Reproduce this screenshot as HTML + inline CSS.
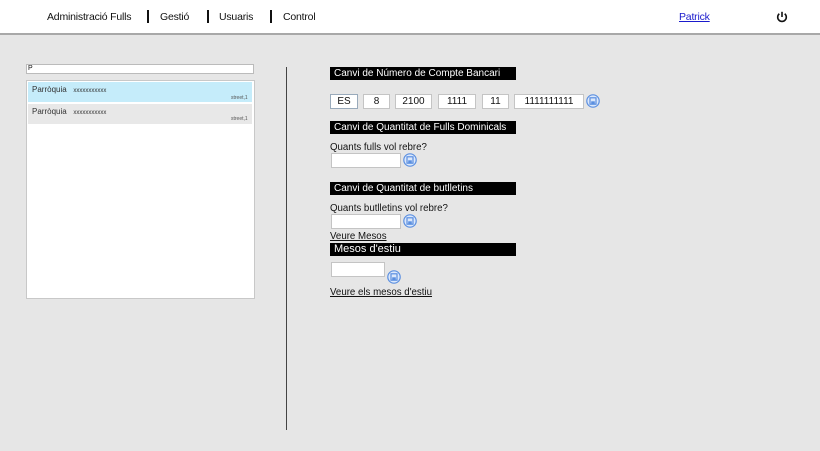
<!DOCTYPE html>
<html><head><meta charset="utf-8"><style>
*{margin:0;padding:0;box-sizing:border-box}
body{width:820px;height:451px;background:#e6e6e6;font-family:"Liberation Sans",Arial,sans-serif;position:relative;overflow:hidden;color:#111}
.hdr{position:absolute;left:0;top:0;width:820px;height:35px;background:#fff;border-bottom:2px solid #a8a8a8}
.t{position:absolute;font-size:9.7px;white-space:nowrap}
.h{font-size:10.5px;top:11px;letter-spacing:-0.2px}
.sep{position:absolute;top:10px;width:2px;height:13px;background:#111}
.abs{position:absolute}
.bar{position:absolute;background:#000;color:#fff;font-size:10px;height:13px;line-height:13px;padding-left:4px;white-space:nowrap;overflow:hidden}
.in{position:absolute;background:#fff;border:1px solid #c4c4c4;font-size:10px;text-align:center;height:15px;line-height:13px}
.sv{position:absolute;width:14px;height:14px}
</style></head><body>
<div class="hdr">
 <div class="t h" style="left:47px">Administració Fulls</div>
 <div class="sep" style="left:147px"></div>
 <div class="t h" style="left:160px">Gestió</div>
 <div class="sep" style="left:207px"></div>
 <div class="t h" style="left:219px">Usuaris</div>
 <div class="sep" style="left:270px"></div>
 <div class="t h" style="left:283px">Control</div>
 <div class="t h" style="left:679px;color:#1a1acc;text-decoration:underline">Patrick</div>
 <svg class="abs" style="left:776px;top:11px" width="12" height="12" viewBox="0 0 12 12"><path d="M3.3 2.8A4.3 4.3 0 1 0 8.7 2.8" fill="none" stroke="#111" stroke-width="1.6"/><path d="M6 0.8V6" stroke="#111" stroke-width="1.6"/></svg>
</div>

<div class="abs" style="left:26px;top:64px;width:228px;height:10px;background:#fff;border:1px solid #bbb;font-size:7px;line-height:8px;padding-left:1px">P</div>
<div class="abs" style="left:26px;top:80px;width:229px;height:219px;background:#fff;border:1px solid #c8c8c8"></div>
<div class="abs" style="left:28px;top:82px;width:224px;height:20px;background:#c5ecfa"></div>
<div class="abs" style="left:28px;top:104px;width:224px;height:20px;background:#e8e8e8"></div>
<div class="t" style="left:32px;top:85px;font-size:8px;color:#333">Parròquia&nbsp;&nbsp; <span style="font-size:6px">xxxxxxxxxxx</span></div>
<div class="t" style="left:231px;top:95px;font-size:5px;color:#555">street,1</div>
<div class="t" style="left:32px;top:107px;font-size:8px;color:#333">Parròquia&nbsp;&nbsp; <span style="font-size:6px">xxxxxxxxxxx</span></div>
<div class="t" style="left:231px;top:116px;font-size:5px;color:#555">street,1</div>

<div class="abs" style="left:286px;top:67px;width:1px;height:363px;background:#444"></div>

<div class="bar" style="left:330px;top:67px;width:186px">Canvi de Número de Compte Bancari</div>
<div class="in" style="left:330px;top:94px;width:28px;border-color:#9ab">ES</div>
<div class="in" style="left:363px;top:94px;width:27px">8</div>
<div class="in" style="left:395px;top:94px;width:37px">2100</div>
<div class="in" style="left:438px;top:94px;width:38px">1111</div>
<div class="in" style="left:482px;top:94px;width:27px">11</div>
<div class="in" style="left:514px;top:94px;width:70px">1111111111</div>
<svg class="sv" style="left:586px;top:94px" viewBox="0 0 14 14"><circle cx="7" cy="7" r="6.2" fill="#dbe8fb" stroke="#5b8fe0" stroke-width="1.2"/><rect x="4" y="3.8" width="6" height="6.4" fill="none" stroke="#5b8fe0" stroke-width="1.2"/><rect x="5.2" y="7.3" width="3.6" height="2.9" fill="#5b8fe0"/></svg>

<div class="bar" style="left:330px;top:121px;width:186px">Canvi de Quantitat de Fulls Dominicals</div>
<div class="t" style="left:330px;top:142px">Quants fulls vol rebre?</div>
<div class="in" style="left:331px;top:153px;width:70px"></div>
<svg class="sv" style="left:403px;top:153px" viewBox="0 0 14 14"><circle cx="7" cy="7" r="6.2" fill="#dbe8fb" stroke="#5b8fe0" stroke-width="1.2"/><rect x="4" y="3.8" width="6" height="6.4" fill="none" stroke="#5b8fe0" stroke-width="1.2"/><rect x="5.2" y="7.3" width="3.6" height="2.9" fill="#5b8fe0"/></svg>

<div class="bar" style="left:330px;top:182px;width:186px">Canvi de Quantitat de butlletins</div>
<div class="t" style="left:330px;top:203px">Quants butlletins vol rebre?</div>
<div class="in" style="left:331px;top:214px;width:70px"></div>
<svg class="sv" style="left:403px;top:214px" viewBox="0 0 14 14"><circle cx="7" cy="7" r="6.2" fill="#dbe8fb" stroke="#5b8fe0" stroke-width="1.2"/><rect x="4" y="3.8" width="6" height="6.4" fill="none" stroke="#5b8fe0" stroke-width="1.2"/><rect x="5.2" y="7.3" width="3.6" height="2.9" fill="#5b8fe0"/></svg>
<div class="t" style="left:330px;top:231px;text-decoration:underline">Veure Mesos</div>
<div class="bar" style="left:330px;top:243px;width:186px;font-size:11px">Mesos d'estiu</div>
<div class="in" style="left:331px;top:262px;width:54px"></div>
<svg class="sv" style="left:387px;top:270px" viewBox="0 0 14 14"><circle cx="7" cy="7" r="6.2" fill="#dbe8fb" stroke="#5b8fe0" stroke-width="1.2"/><rect x="4" y="3.8" width="6" height="6.4" fill="none" stroke="#5b8fe0" stroke-width="1.2"/><rect x="5.2" y="7.3" width="3.6" height="2.9" fill="#5b8fe0"/></svg>
<div class="t" style="left:330px;top:287px;text-decoration:underline">Veure els mesos d'estiu</div>
</body></html>
